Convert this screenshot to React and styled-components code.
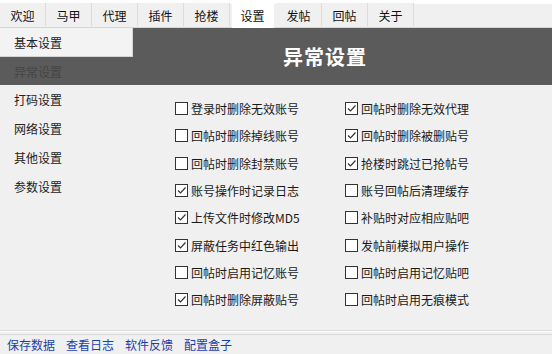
import React from "react";
import styled, { createGlobalStyle } from "styled-components";

const Global = createGlobalStyle`
  html, body { margin: 0; padding: 0; background: #f0f0f0; }
  * { box-sizing: border-box; }
  body { font-family: "Noto Sans CJK SC", "Noto Sans", sans-serif; }
`;

const Window = styled.div`
  width: 555px;
  height: 354px;
  background: #f0f0f0;
  display: flex;
  flex-direction: column;
  overflow: hidden;
  border-right: 3px solid #ffffff;
`;

const TabBar = styled.div`
  height: 28px;
  display: flex;
  align-items: flex-end;
  background: linear-gradient(#ffffff 0 4px, #f0f0f0 4px);
  border-bottom: 1px solid #d6d6d6;
`;

const Tab = styled.div`
  width: ${(p) => (p.$active ? 42 : 46)}px;
  height: ${(p) => (p.$active ? 26 : 23)}px;
  display: flex;
  align-items: center;
  justify-content: center;
  padding-top: 1px;
  font-size: 12px;
  color: #111;
  background: ${(p) => (p.$active ? "#ffffff" : "#f0f0f0")};
  border-right: 1px solid ${(p) => (p.$active ? "#ffffff" : "#dcdcdc")};
  margin-bottom: ${(p) => (p.$active ? -1 : 1)}px;
  margin-left: ${(p) => (p.$active ? 2 : 0)}px;
  margin-right: ${(p) => (p.$active ? 2 : 0)}px;
`;

const Body = styled.div`
  flex: 1;
  display: grid;
  grid-template-columns: 133px 1fr;
  grid-template-rows: 57px 1fr;
`;

const Sidebar = styled.div`
  grid-row: 1 / span 2;
  display: flex;
  flex-direction: column;
`;

const SideItem = styled.div`
  height: ${(p) => p.$h || 29}px;
  display: flex;
  align-items: center;
  padding-left: 14px;
  font-size: 12px;
  color: ${(p) => (p.$active ? "#454545" : "#222")};
  background: ${(p) => (p.$active ? "#5b5b5b" : "#f0f0f0")};
  ${(p) =>
    p.$boxed &&
    `border-bottom: 1px solid #d4d4d4; border-right: 1px solid #d4d4d4; background: #f3f3f3;`}
`;

const Header = styled.div`
  background: #5b5b5b;
  display: flex;
  align-items: center;
  padding-left: 150px;
`;

const Title = styled.div`
  color: #ffffff;
  font-size: 20px;
  font-weight: 700;
  letter-spacing: 1px;
`;

const Options = styled.div`
  display: grid;
  grid-template-columns: 170px 170px;
  grid-auto-rows: 27.3px;
  padding: 10px 0 0 42px;
  align-content: start;
`;

const Option = styled.label`
  display: flex;
  align-items: center;
  gap: 3px;
  font-size: 12px;
  color: #1a1a1a;
  white-space: nowrap;
`;

const Box = styled.span`
  width: 13px;
  height: 13px;
  border: 1px solid #333;
  background: #fff;
  display: flex;
  align-items: center;
  justify-content: center;
  flex: none;
`;

const Footer = styled.div`
  height: 24px;
  border-top: 1px solid #dadada;
  box-shadow: inset 0 1px 0 #ffffff, inset 0 3px 0 #f0f0f0, inset 0 4px 0 #dadada;
  display: flex;
  align-items: center;
  gap: 11px;
  padding: 4px 0 0 7px;
`;

const Link = styled.span`
  font-size: 12px;
  color: #1b3fa8;
`;

const Check = () => (
  <svg width="11" height="11" viewBox="0 0 11 11">
    <path d="M2 5.5 L4.5 8 L9.5 2.5" fill="none" stroke="#333" strokeWidth="1.2" />
  </svg>
);

const tabs = ["欢迎", "马甲", "代理", "插件", "抢楼", "设置", "发帖", "回帖", "关于"];
const side = ["基本设置", "异常设置", "打码设置", "网络设置", "其他设置", "参数设置"];
const opts = [
  ["登录时删除无效账号", false],
  ["回帖时删除无效代理", true],
  ["回帖时删除掉线账号", false],
  ["回帖时删除被删贴号", true],
  ["回帖时删除封禁账号", false],
  ["抢楼时跳过已抢帖号", true],
  ["账号操作时记录日志", true],
  ["账号回帖后清理缓存", false],
  ["上传文件时修改MD5", true],
  ["补贴时对应相应贴吧", false],
  ["屏蔽任务中红色输出", true],
  ["发帖前模拟用户操作", false],
  ["回帖时启用记忆账号", false],
  ["回帖时启用记忆贴吧", false],
  ["回帖时删除屏蔽贴号", true],
  ["回帖时启用无痕模式", false],
];

export default function App() {
  return (
    <>
      <Global />
      <Window>
        <TabBar>
          {tabs.map((t) => (
            <Tab key={t} $active={t === "设置"}>
              {t}
            </Tab>
          ))}
        </TabBar>
        <Body>
          <Sidebar>
            {side.map((s, i) => (
              <SideItem key={s} $boxed={i === 0} $active={i === 1} $h={i === 1 ? 28 : 29}>
                {s}
              </SideItem>
            ))}
          </Sidebar>
          <Header>
            <Title>异常设置</Title>
          </Header>
          <Options>
            {opts.map(([label, on]) => (
              <Option key={label}>
                <Box>{on && <Check />}</Box>
                {label}
              </Option>
            ))}
          </Options>
        </Body>
        <Footer>
          <Link>保存数据</Link>
          <Link>查看日志</Link>
          <Link>软件反馈</Link>
          <Link>配置盒子</Link>
        </Footer>
      </Window>
    </>
  );
}
